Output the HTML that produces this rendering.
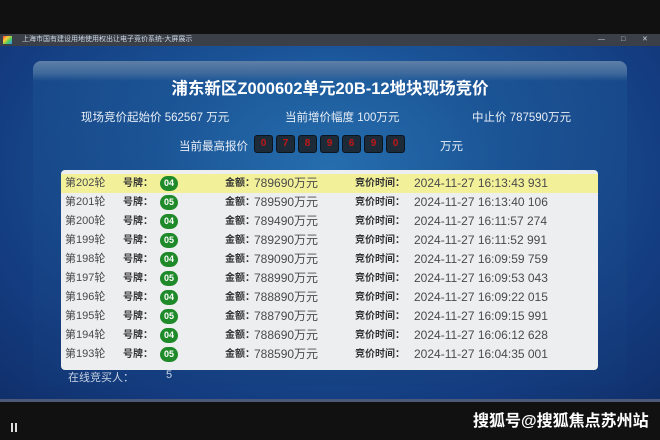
<!DOCTYPE html>
<html><head><meta charset="utf-8"><style>
*{margin:0;padding:0;box-sizing:border-box}
body{width:660px;height:440px;overflow:hidden;background:#111;font-family:"Liberation Sans","Noto Sans CJK SC",sans-serif;position:relative}
.abs{position:absolute;white-space:nowrap}
#tb{left:0;top:34px;width:660px;height:12px;background:#3a3f48;color:#cfd6e0;font-size:7px;line-height:12px}
#main{left:0;top:46px;width:660px;height:355px;background:radial-gradient(ellipse at 50% 35%,#2a7bbd 0%,#1a5296 40%,#143c80 75%,#102f6a 100%)}
#panel{left:33px;top:61px;width:594px;height:325px;border-radius:8px;background:linear-gradient(#5e7fa8 0,#3f6a9c 12px,rgba(30,90,150,.35) 20px,rgba(20,60,120,.25) 100%)}
.w{color:#e8eef6;font-size:11.5px}
#title{left:0;width:660px;top:75px;text-align:center;color:#fff;font-size:16.5px;font-weight:bold}
.box{top:135px;width:19px;height:18px;background:#1d2a38;border-radius:3px;border:1px solid #0a1520;color:#c01818;font-size:10px;font-weight:bold;text-align:center;line-height:16px}
#tbl{left:61px;top:170px;width:537px;height:200px;background:#eceef0;border-radius:4px;overflow:hidden}
.row{position:absolute;left:0;width:537px;height:19px;font-size:11px;color:#4a4a4a;line-height:19px}
.row span{position:absolute}
.b{font-weight:bold;color:#333;font-size:10px}
.t{font-size:12px}
.badge{left:99px;top:2px;width:18px;height:15px;border-radius:8px;background:#1f8a2a;color:#fff;font-size:9px;font-weight:bold;text-align:center;line-height:15px}
</style></head><body>
<div class="abs" id="tb"><span style="position:absolute;left:3px;top:2px;width:9px;height:8px;background:linear-gradient(135deg,#e44,#fc3,#4c6,#48f)"></span><span style="position:absolute;left:22px">上海市国有建设用地使用权出让电子竞价系统-大屏展示</span><span style="position:absolute;left:598px">—</span><span style="position:absolute;left:621px">□</span><span style="position:absolute;left:642px">✕</span></div>
<div class="abs" id="main"></div>
<div class="abs" id="panel"></div>
<div class="abs" id="title">浦东新区Z000602单元20B-12地块现场竞价</div>
<div class="abs w" style="left:81px;top:109px">现场竞价起始价 562567 万元</div>
<div class="abs w" style="left:285px;top:109px">当前增价幅度 100万元</div>
<div class="abs w" style="left:472px;top:109px">中止价 787590万元</div>
<div class="abs w" style="left:179px;top:138px">当前最高报价</div>
<div class="abs box" style="left:254px">0</div><div class="abs box" style="left:276px">7</div><div class="abs box" style="left:298px">8</div><div class="abs box" style="left:320px">9</div><div class="abs box" style="left:342px">6</div><div class="abs box" style="left:364px">9</div><div class="abs box" style="left:386px">0</div>
<div class="abs w" style="left:440px;top:138px">万元</div>
<div class="abs" id="tbl">
<div class="row" style="top:4px;height:19px;background:#f3f09a"><span style="left:4px">第202轮</span><span class="b" style="left:62px">号牌：</span><span class="badge">04</span><span class="b" style="left:164px">金额：</span><span class="t" style="left:193px">789690万元</span><span class="b" style="left:294px">竞价时间：</span><span class="t" style="left:353px">2024-11-27 16:13:43 931</span></div>
<div class="row" style="top:23px"><span style="left:4px">第201轮</span><span class="b" style="left:62px">号牌：</span><span class="badge">05</span><span class="b" style="left:164px">金额：</span><span class="t" style="left:193px">789590万元</span><span class="b" style="left:294px">竞价时间：</span><span class="t" style="left:353px">2024-11-27 16:13:40 106</span></div>
<div class="row" style="top:42px"><span style="left:4px">第200轮</span><span class="b" style="left:62px">号牌：</span><span class="badge">04</span><span class="b" style="left:164px">金额：</span><span class="t" style="left:193px">789490万元</span><span class="b" style="left:294px">竞价时间：</span><span class="t" style="left:353px">2024-11-27 16:11:57 274</span></div>
<div class="row" style="top:61px"><span style="left:4px">第199轮</span><span class="b" style="left:62px">号牌：</span><span class="badge">05</span><span class="b" style="left:164px">金额：</span><span class="t" style="left:193px">789290万元</span><span class="b" style="left:294px">竞价时间：</span><span class="t" style="left:353px">2024-11-27 16:11:52 991</span></div>
<div class="row" style="top:80px"><span style="left:4px">第198轮</span><span class="b" style="left:62px">号牌：</span><span class="badge">04</span><span class="b" style="left:164px">金额：</span><span class="t" style="left:193px">789090万元</span><span class="b" style="left:294px">竞价时间：</span><span class="t" style="left:353px">2024-11-27 16:09:59 759</span></div>
<div class="row" style="top:99px"><span style="left:4px">第197轮</span><span class="b" style="left:62px">号牌：</span><span class="badge">05</span><span class="b" style="left:164px">金额：</span><span class="t" style="left:193px">788990万元</span><span class="b" style="left:294px">竞价时间：</span><span class="t" style="left:353px">2024-11-27 16:09:53 043</span></div>
<div class="row" style="top:118px"><span style="left:4px">第196轮</span><span class="b" style="left:62px">号牌：</span><span class="badge">04</span><span class="b" style="left:164px">金额：</span><span class="t" style="left:193px">788890万元</span><span class="b" style="left:294px">竞价时间：</span><span class="t" style="left:353px">2024-11-27 16:09:22 015</span></div>
<div class="row" style="top:137px"><span style="left:4px">第195轮</span><span class="b" style="left:62px">号牌：</span><span class="badge">05</span><span class="b" style="left:164px">金额：</span><span class="t" style="left:193px">788790万元</span><span class="b" style="left:294px">竞价时间：</span><span class="t" style="left:353px">2024-11-27 16:09:15 991</span></div>
<div class="row" style="top:156px"><span style="left:4px">第194轮</span><span class="b" style="left:62px">号牌：</span><span class="badge">04</span><span class="b" style="left:164px">金额：</span><span class="t" style="left:193px">788690万元</span><span class="b" style="left:294px">竞价时间：</span><span class="t" style="left:353px">2024-11-27 16:06:12 628</span></div>
<div class="row" style="top:175px"><span style="left:4px">第193轮</span><span class="b" style="left:62px">号牌：</span><span class="badge">05</span><span class="b" style="left:164px">金额：</span><span class="t" style="left:193px">788590万元</span><span class="b" style="left:294px">竞价时间：</span><span class="t" style="left:353px">2024-11-27 16:04:35 001</span></div>
</div>
<div class="abs w" style="left:68px;top:369px;color:#c8d4e4;font-size:11px">在线竞买人：</div>
<div class="abs w" style="left:166px;top:369px;color:#c8d4e4;font-size:11px">5</div>
<div class="abs" style="left:0;top:399px;width:660px;height:3px;background:#4a5a78"></div>
<div class="abs" style="left:11px;top:423px;width:2px;height:9px;background:#ddd"></div>
<div class="abs" style="left:15px;top:423px;width:2px;height:9px;background:#ddd"></div>
<div class="abs" style="left:473px;top:407px;color:#fff;font-size:16px;font-weight:bold">搜狐号@搜狐焦点苏州站</div>
</body></html>
